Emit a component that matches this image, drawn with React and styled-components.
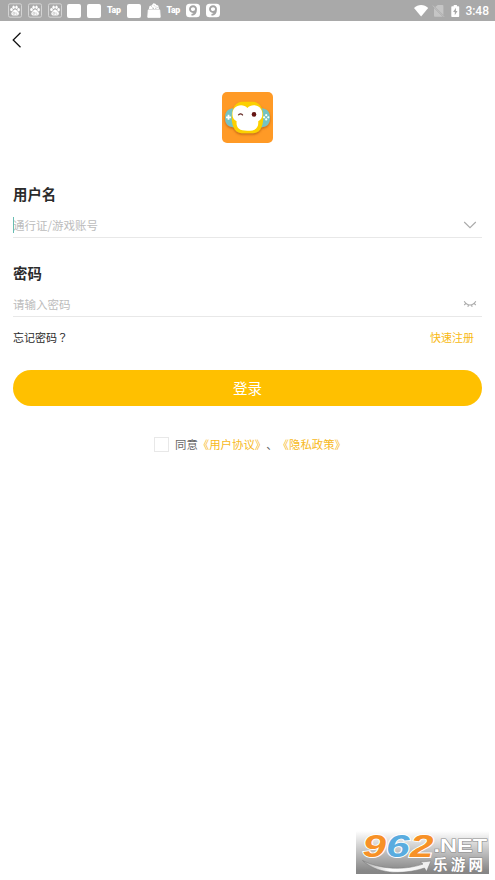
import React, { useState } from "react"
import styled, { createGlobalStyle } from "styled-components"

const NOTICES = ["paw", "paw", "paw", "blank", "blank", "tap", "blank", "bag", "tap", "nine", "nine"]

export default function App() {
    const [agreed, setAgreed] = useState(false);

    return (
        <>
            <GlobalStyle />
            <Screen>
                <StatusBar>
                    <NoticeList>
                        {NOTICES.map((type, index) => (
                            <Notice key={index} type={type} />
                        ))}
                    </NoticeList>
                    <SystemIcons />
                    <Clock>3:48</Clock>
                </StatusBar>
                <TopBar>
                    <BackButton aria-label="返回">
                        <svg width="10" height="16" viewBox="0 0 10 16" fill="none" stroke="#111" strokeWidth="1.25">
                            <path d="M8.5 .8 1.2 8l7.3 7.2" />
                        </svg>
                    </BackButton>
                </TopBar>
                <LogoWrap>
                    <MonkeyLogo />
                </LogoWrap>
                <Form>
                    <Label>用户名</Label>
                    <Field>
                        <Caret />
                        <Placeholder>通行证/游戏账号</Placeholder>
                        <svg width="14" height="8" viewBox="0 0 14 8" fill="none" stroke="#aaa" strokeWidth="1.1">
                            <path d="m1.2 1 5.8 5.7L12.8 1" />
                        </svg>
                    </Field>
                    <Label $second>密码</Label>
                    <Field>
                        <Placeholder>请输入密码</Placeholder>
                        <svg width="14" height="8" viewBox="0 0 14 8" fill="none" stroke="#aaa" strokeWidth="1.1">
                            <path d="M1.2 1.2c3 5 8.6 5 11.6 0M3 3.4 1.2 5M5.4 4.8 4.9 6.8M8.6 4.8l.5 2M11 3.4 12.8 5" />
                        </svg>
                    </Field>
                    <Links>
                        <ForgotLink>忘记密码？</ForgotLink>
                        <RegisterLink>快速注册</RegisterLink>
                    </Links>
                    <LoginButton>登录</LoginButton>
                    <Agreement>
                        <CheckBox
                            role="checkbox"
                            aria-checked={agreed}
                            aria-label="同意"
                            $checked={agreed}
                            onClick={() => setAgreed(!agreed)}
                        />
                        <span>同意<Policy>《用户协议》</Policy>、<Policy>《隐私政策》</Policy></span>
                    </Agreement>
                </Form>
                <SiteMark />
            </Screen>
        </>
    )
}

function Notice({ type }) {
    if (type === "tap") return <TapText>Tap</TapText>
    if (type === "blank") return <BlankIcon />

    return (
        <svg width="14" height="15" viewBox="0 0 14 15">
            {type === "paw" && (
                <>
                    <rect x=".5" y=".8" width="13" height="13.4" rx="1.5" fill="none" stroke="#d8d8d8" strokeWidth=".9" />
                    <g fill="#fff">
                        <ellipse cx="3.5" cy="6.6" rx="1.3" ry="1.7" />
                        <ellipse cx="5.6" cy="4.2" rx="1.2" ry="1.7" />
                        <ellipse cx="8.5" cy="4.2" rx="1.2" ry="1.7" />
                        <ellipse cx="10.6" cy="6.8" rx="1.3" ry="1.7" />
                        <path d="M7.1 6.5c1.5 0 1.9 1.6 3.1 2.6 1.4 1.2.7 3.3-.9 3.3H4.9c-1.7 0-2.2-2.1-.9-3.3 1.2-1 1.6-2.6 3.1-2.6Z" />
                    </g>
                    <path d="M5 9.3h1.6v1.9H5ZM8 9.2v2h1.5" fill="none" stroke="#bbb" strokeWidth=".6" />
                </>
            )}
            {type === "bag" && (
                <>
                    <path d="M1.3 6.9h11.4L13.2 14.3H.8Z" fill="#fff" stroke="#fff" strokeLinejoin="round" />
                    <path d="M1.8 6 2.6 3l2-.5L6.4.3l2 .4 1 1.3 1.8.5.8 3.5Z" fill="#fff" />
                    <path d="m4.5 3.5.8.8M7.2 2.5l.7.8M9.5 3.8l.8.8M5.5 5.3H7M8.3 5.3h1" stroke="#a9a9a9" strokeWidth=".9" />
                </>
            )}
            {type === "nine" && (
                <>
                    <rect y=".7" width="14" height="13.6" rx="3.5" fill="#fff" />
                    <path
                        d="M10 6.3a3 2.9 0 1 0-3 2.7c1.6 0 3-1 3-2.7 0 3.3-1.500 5.300-4.500 5.600"
                        fill="none"
                        stroke="#a4a4a4"
                        strokeWidth="1.9"
                    />
                </>
            )}
        </svg>
    )
}

function SystemIcons() {
    return (
        <svg width="48" height="14" viewBox="0 0 48 14">
            <path d="M0 4.1C4-.2 10.2-.2 14.2 4.1L7.1 12.5Z" fill="#fff" />
            <path d="M20.5 2.2 29.4 11V1.7c0-.5-.4-.8-.9-.8h-4.7l-2.5 2ZM20 4v7.8c0 .5.4.9.9.9h7.8Z" fill="#c5c5c5" />
            <path d="m18.9 1.6 11.2 11.2" stroke="#c5c5c5" strokeWidth=".9" />
            <path d="M38 2.2h1.7V1h3.2v1.2h1.6c.4 0 .7.3.7.7v9.4c0 .4-.3.7-.7.7H38c-.4 0-.7-.3-.7-.7V2.9c0-.4.3-.7.7-.7Z" fill="#fff" />
            <path d="M41.9 3.8 39.1 8h1.7v3.2L43.5 7h-1.6Z" fill="#a7a7a7" />
        </svg>
    )
}

function MonkeyLogo() {
    return (
        <svg width="51" height="51" viewBox="0 0 51 51">
            <defs>
                <filter id="logoShadow" x="-20%" y="-20%" width="140%" height="150%">
                    <feDropShadow dx="0" dy="1.3" stdDeviation=".9" floodColor="#a84d08" floodOpacity=".7" />
                </filter>
            </defs>
            <rect width="51" height="51" rx="5" fill="#ff9a26" />
            <g filter="url(#logoShadow)">
                <path d="M12 16.3C6 16.3 3 20 3 25.8S6 35.3 12 35.3ZM39 16.3c6 0 9 3.7 9 9.5s-3 9.5-9 9.5Z" fill="#74c3c2" />
                <path d="M20 9.7h11c5.5 0 10.3 5 10.3 15.8S36.5 41.3 31 41.3H20c-5.5 0-10.3-5-10.3-15.8S14.5 9.7 20 9.7Z" fill="#fcd000" />
            </g>
            <path
                d="M25.4 16c1.5-2 4-2.8 6.3-2.8 5.2 0 8.7 3.8 8.7 8.8 0 3.5-1.5 6-4.2 7.3.6 6.5-2.4 9.5-10.8 9.5s-11.4-3-10.8-9.5C11.9 28 10.4 25.5 10.4 22c0-5 3.5-8.8 8.7-8.8 2.3 0 4.8.8 6.3 2.8Z"
                fill="#fff"
            />
            <circle cx="32" cy="22.4" r="2.3" fill="#661614" />
            <path d="M16.3 23.2c1-1.7 3.5-1.7 4.5.2" fill="none" stroke="#5d201a" strokeWidth="1.2" />
            <path d="M6.5 22.8v5M4 25.3h5" stroke="#fff" strokeWidth="1.8" />
            <g fill="#fff">
                <circle cx="44.2" cy="23.2" r="1.1" />
                <circle cx="44.2" cy="27.4" r="1.1" />
                <circle cx="42.1" cy="25.3" r="1.1" />
                <circle cx="46.3" cy="25.3" r="1.1" />
            </g>
        </svg>
    )
}

function SiteMark() {
    return (
        <MarkBox>
            <svg width="133" height="43" viewBox="0 0 133 43" overflow="visible">
                <defs>
                    <linearGradient id="swoosh" x1="0" x2="1">
                        <stop offset="0" stopColor="#aaa" />
                        <stop offset=".4" stopColor="#fff" />
                        <stop offset="1" stopColor="#eee" />
                    </linearGradient>
                </defs>
                <g
                    fontFamily="'Liberation Sans', Arial, sans-serif"
                    fontWeight="bold"
                    fontStyle="italic"
                    fontSize="32"
                    stroke="#fff"
                    strokeWidth="1.8"
                    paintOrder="stroke"
                >
                    <text x="6.5" y="26" textLength="23.5" lengthAdjust="spacingAndGlyphs" fill="#f79127">9</text>
                    <text x="30" y="26" textLength="23.5" lengthAdjust="spacingAndGlyphs" fill="#59acdf">6</text>
                    <text x="54" y="26" textLength="23.5" lengthAdjust="spacingAndGlyphs" fill="#f79127">2</text>
                </g>
                <path
                    d="M6.5 29.5c17 8.5 40 10.5 60.5 3.6l-2.5-2L75 30 70.5 40.5 68.5 37C45 44.5 20 42.5 6.5 29.5Z"
                    fill="url(#swoosh)"
                    stroke="#777"
                    strokeWidth=".5"
                />
                <g fill="#fff" stroke="#888" strokeWidth="1" paintOrder="stroke">
                    <text
                        x="77.5"
                        y="20.500"
                        textLength="53.5"
                        lengthAdjust="spacingAndGlyphs"
                        fontFamily="'Liberation Sans', Arial, sans-serif"
                        fontWeight="bold"
                        fontSize="18"
                    >
                        .NET
                    </text>
                    <text x="77" y="38.500" textLength="50" fontFamily="'Noto Sans CJK SC', sans-serif" fontWeight="bold" fontSize="14.5">乐游网</text>
                </g>
            </svg>
        </MarkBox>
    )
}

const GlobalStyle = createGlobalStyle`
    * {
        box-sizing: border-box;
    }

    body {
        margin: 0;
        background: #fff;
    }

    svg {
        display: block;
        flex-shrink: 0;
    }

    button {
        border: 0;
        padding: 0;
        font-family: inherit;
    }
`

const Screen = styled.div`
    display: flex;
    flex-direction: column;
    height: 880px;
    padding-bottom: 6px;
    background: #fff;
    color: #2b2b2b;
    font-family: "Noto Sans CJK SC", sans-serif;
    text-spacing-trim: space-all;
`

const StatusBar = styled.div`
    display: flex;
    align-items: center;
    height: 21px;
    padding: 0 6px 0 8px;
    background: #a9a9a9;
`

const NoticeList = styled.div`
    display: flex;
    flex: 1;
    align-items: center;
    gap: 5.8px;
`

const BlankIcon = styled.span`
    width: 14px;
    height: 14px;
    border-radius: 2px;
    background: #fff;
`

const TapText = styled.span`
    width: 14px;
    padding-bottom: 1px;
    color: #fff;
    font: 900 8.8px/14px Roboto, sans-serif;
    letter-spacing: -0.3px;
    white-space: nowrap;
`

const Clock = styled.span`
    margin-left: 3px;
    color: #fff;
    font: 500 12px/20px Roboto, sans-serif;
`

const TopBar = styled.div`
    display: flex;
    align-items: center;
    height: 38px;
    padding-left: 12px;
`

const BackButton = styled.button`
    background: none;
`

const LogoWrap = styled.div`
    display: flex;
    justify-content: center;
    padding: 33px 1px 0 0;
`

const Form = styled.div`
    display: flex;
    flex-direction: column;
    padding: 40px 13px 0;
`

const Label = styled.div`
    height: 21px;
    margin-top: ${({ $second }) => ($second ? "24px" : "0")};
    font-size: 14.4px;
    font-weight: bold;
    line-height: 21px;
`

const Field = styled.div`
    position: relative;
    display: flex;
    align-items: center;
    justify-content: space-between;
    height: 34px;
    padding: 8px 5px 0 0;
    border-bottom: 1px solid #e8e8e8;
`

const Caret = styled.span`
    position: absolute;
    left: 0;
    top: 13px;
    width: 1px;
    height: 16px;
    background: #68bdb2;
`

const Placeholder = styled.span`
    padding-top: 1px;
    color: #bcbcbc;
    font-size: 11.5px;
    line-height: 17px;
`

const Links = styled.div`
    display: flex;
    align-items: center;
    justify-content: space-between;
    height: 18px;
    margin-top: 11px;
    padding-right: 8px;
    font-size: 11px;
`

/* the TC face centres the full-width question mark */
const ForgotLink = styled.a`
    color: #2b2b2b;
    font-family: "Noto Sans CJK TC", sans-serif;
`

const RegisterLink = styled.a`
    color: #f8b912;
`

const LoginButton = styled.button`
    height: 36px;
    margin-top: 24px;
    border-radius: 18px;
    background: #ffc000;
    color: #fff;
    font-size: 14.6px;
    line-height: 36px;
`

const Agreement = styled.div`
    display: flex;
    align-items: center;
    justify-content: center;
    gap: 6px;
    height: 18px;
    margin-top: 29px;
    padding-left: 5px;
    color: #666;
    font-size: 11.4px;
    line-height: 18px;
    white-space: nowrap;
`

const CheckBox = styled.button`
    width: 15px;
    height: 15px;
    border: 1.5px solid #e8e8e8;
    background: ${({ $checked }) => ($checked ? "#ffc000" : "#fff")};
`

const Policy = styled.a`
    color: #f7b91c;
`

const MarkBox = styled.div`
    width: 133px;
    height: 43px;
    margin: auto 6px 0 auto;
    background: linear-gradient(#fff, #dedede 25%, #888 92%, #858585);
`
